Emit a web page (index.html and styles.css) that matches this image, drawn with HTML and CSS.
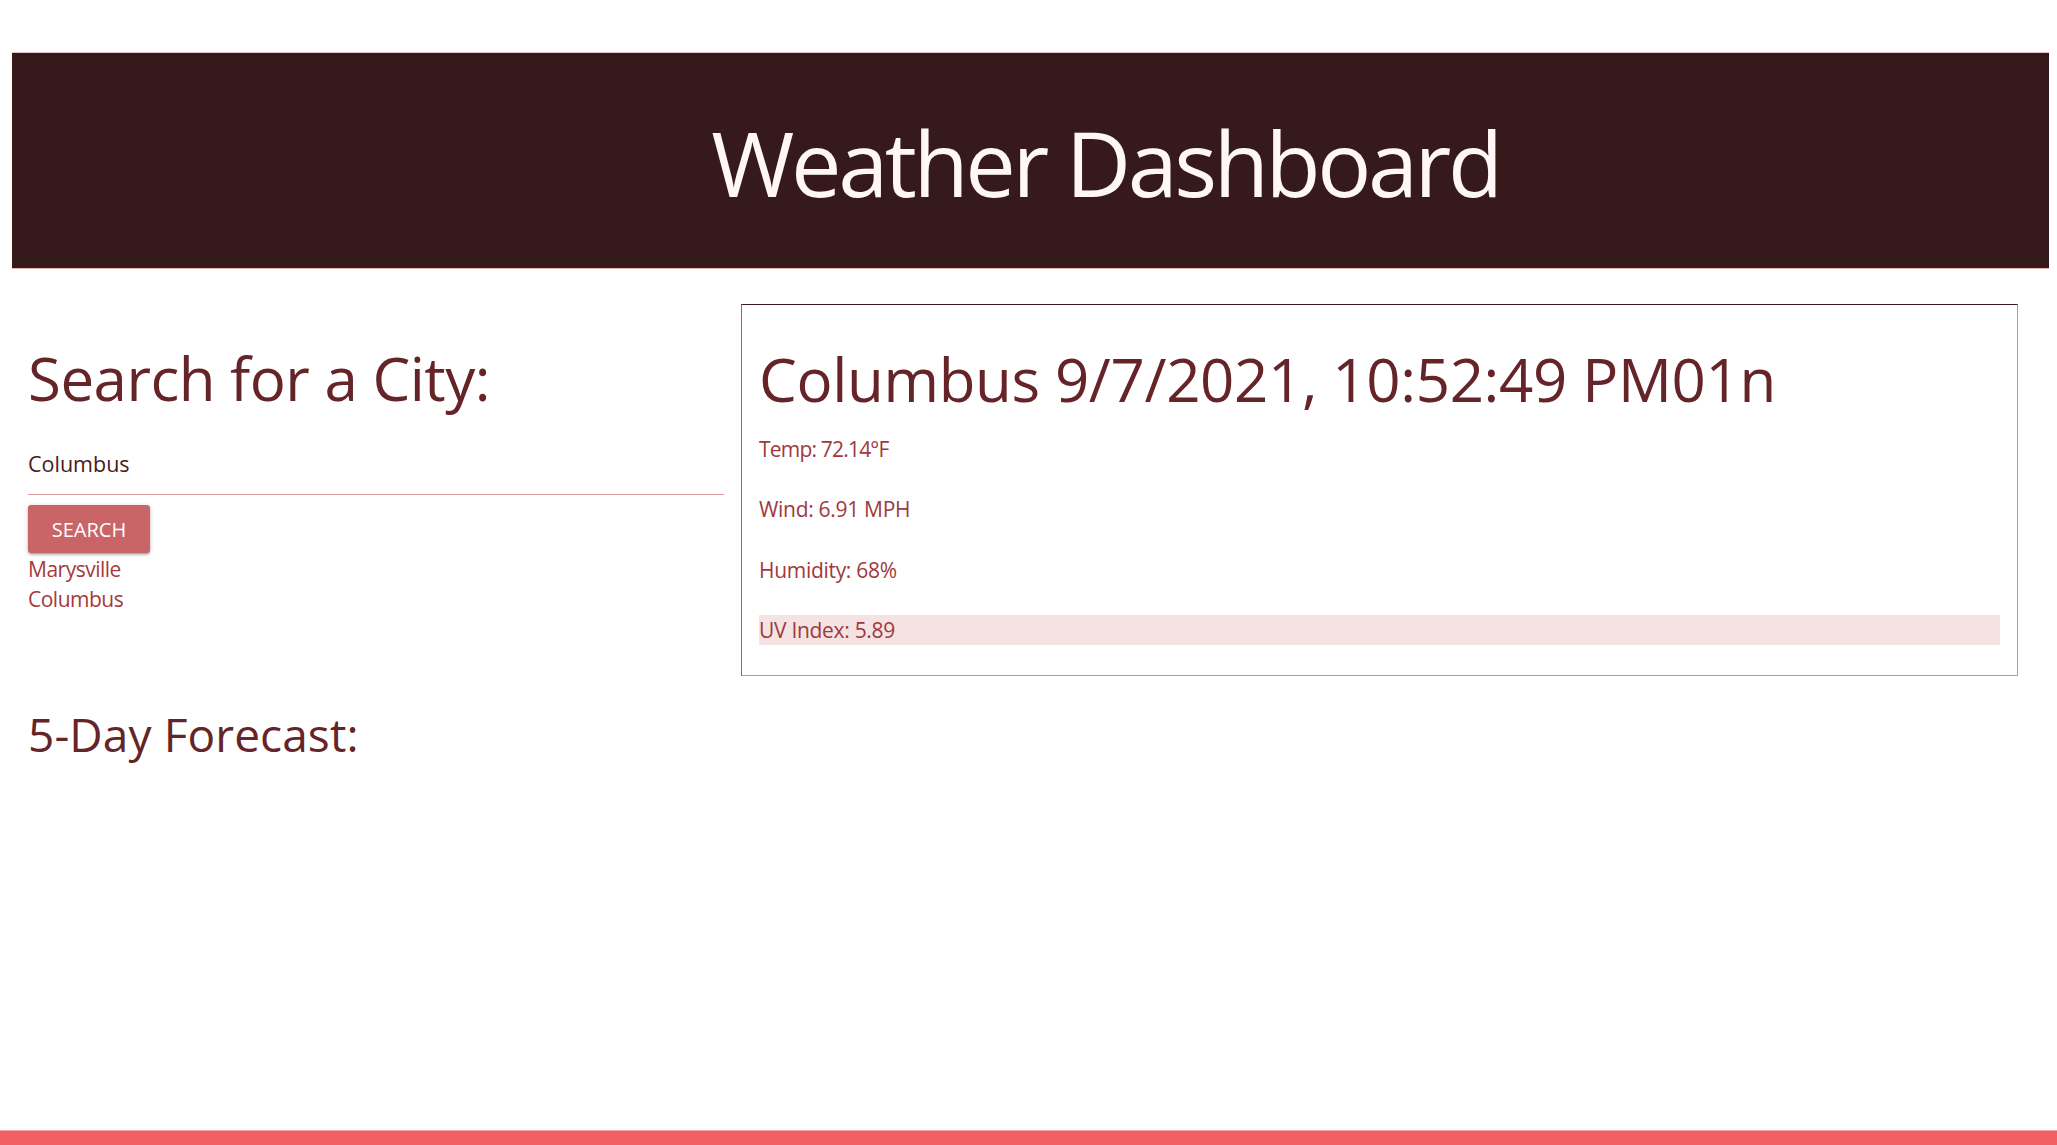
FILE: index.html
```html
<!DOCTYPE html>
<html lang="en">
<head>
<meta charset="utf-8">
<title>Weather Dashboard</title>
<link rel="stylesheet" href="styles.css">
</head>
<body>
  <div class="page">
    <header class="banner">
      <h1 class="banner-title">Weather Dashboard</h1>
    </header>

    <main class="main-row">
      <section class="search-col">
        <h2 class="section-heading">Search for a City:</h2>
        <input class="city-input" type="text" value="Columbus">
        <button class="search-btn" type="button">Search</button>
        <ul class="history">
          <li class="history-item">Marysville</li>
          <li class="history-item">Columbus</li>
        </ul>
      </section>

      <section class="current-card">
        <h2 class="card-title">Columbus 9/7/2021, 10:52:49 PM01n</h2>
        <p class="detail detail-temp">Temp: 72.14°F</p>
        <p class="detail">Wind: 6.91 MPH</p>
        <p class="detail">Humidity: 68%</p>
        <p class="detail detail-uv">UV Index: 5.89</p>
      </section>
    </main>

    <section class="forecast">
      <h3 class="forecast-heading">5-Day Forecast:</h3>
    </section>
  </div>
  <footer class="footer-bar"></footer>
</body>
</html>
```

FILE: styles.css
```css
* {
  box-sizing: border-box;
}

html, body {
  margin: 0;
  padding: 0;
}

body {
  min-height: 100vh;
  display: flex;
  flex-direction: column;
  font-family: "Open Sans", "Noto Sans", "Liberation Sans", sans-serif;
  background: #ffffff;
  overflow: hidden;
}

.page {
  flex: 1;
  padding: 52px 8px 0 12px;
}

.banner {
  height: 217px;
  background: #361a1b;
  border-top: 1px solid #e8c4c4;
  border-bottom: 1px solid #e8b4b4;
  padding: 64px 0 0 150px;
  text-align: center;
}

.banner-title {
  margin: 0;
  font-size: 90px;
  line-height: 90px;
  font-weight: 400;
  color: #fff6f6;
  letter-spacing: -3.4px;
}

.main-row {
  display: flex;
  align-items: flex-start;
  margin-top: 35px;
  padding-left: 16px;
}

.search-col {
  width: 696px;
  flex: none;
}

.section-heading {
  margin: 38px 0 0 0;
  font-size: 60px;
  line-height: 72px;
  font-weight: 400;
  color: #652427;
  letter-spacing: -0.5px;
}

.city-input {
  display: block;
  width: 100%;
  height: 62px;
  margin: 19px 0 0 0;
  padding: 0;
  border: none;
  border-bottom: 1px solid #e39d9e;
  outline: none;
  background: transparent;
  font-family: inherit;
  font-size: 21.5px;
  color: #4a1a1c;
  letter-spacing: 0;
}

.search-btn {
  display: block;
  margin-top: 10px;
  width: 122px;
  height: 48px;
  padding: 0;
  border: none;
  border-radius: 3px;
  background: #c96567;
  color: #ffffff;
  font-family: inherit;
  font-size: 20px;
  letter-spacing: 0;
  text-transform: uppercase;
  box-shadow: 0 2px 2px 0 rgba(0,0,0,0.14), 0 3px 1px -2px rgba(0,0,0,0.12), 0 1px 5px 0 rgba(0,0,0,0.2);
}

.history {
  list-style: none;
  margin: 1px 0 0 0;
  padding: 0;
}

.history-item {
  font-size: 21px;
  line-height: 30px;
  color: #a6393c;
  letter-spacing: -0.5px;
}

.current-card {
  flex: none;
  width: 1277px;
  margin-left: 17px;
  border: 1px solid #d58a8c;
  border-top-color: #3b1b1c;
  border-left-color: #b0585a;
  padding: 17px 17px 30px 17px;
}

.card-title {
  margin: 21px 0 0 0;
  font-size: 60px;
  line-height: 72px;
  font-weight: 400;
  color: #652427;
  letter-spacing: -0.35px;
  white-space: nowrap;
}

.detail {
  margin: 19px 0 0 0;
  font-size: 21px;
  line-height: 30px;
  color: #a0393d;
  letter-spacing: -0.3px;
}

.detail + .detail {
  margin-top: 30.3px;
}

.detail-temp {
  letter-spacing: -0.8px;
}

.detail-uv {
  background: #f5e2e3;
}

.forecast {
  padding-left: 16px;
  margin-top: 31px;
}

.forecast-heading {
  margin: 0;
  font-size: 46px;
  line-height: 55px;
  font-weight: 400;
  color: #652427;
  letter-spacing: 0.1px;
}

.footer-bar {
  height: 15px;
  background: #f25f64;
  border-top: 1px solid #f6a9ab;
}
```
